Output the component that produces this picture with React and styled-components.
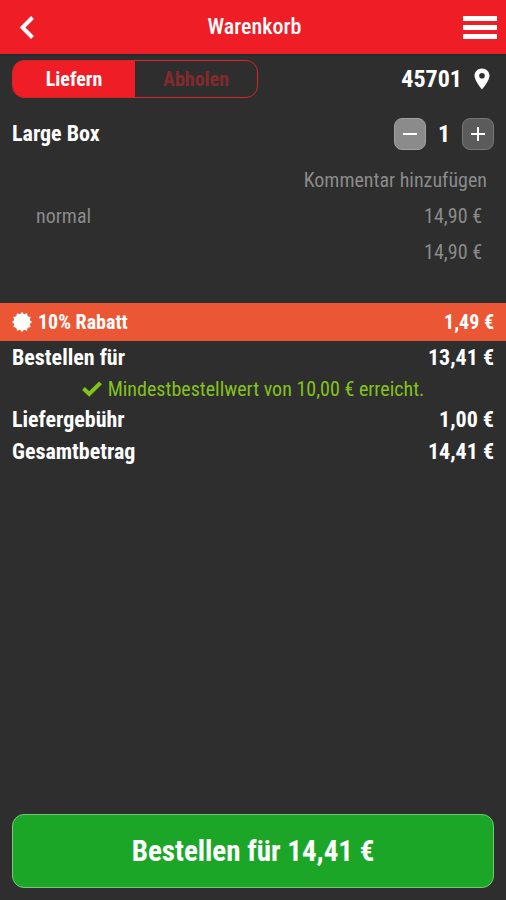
import React, { useState } from 'react';
import styled, { createGlobalStyle } from 'styled-components';

const GlobalStyle = createGlobalStyle`
  * {
    box-sizing: border-box;
  }

  body {
    margin: 0;
    background: #2e2e2e;
    color: #fff;
    font-family: 'Roboto Condensed', Roboto, 'Liberation Sans Narrow', sans-serif;
  }

  button,
  input {
    font-family: inherit;
  }
`;

const Page = styled.div`
  min-height: 100vh;
  display: flex;
  flex-direction: column;
`;

const Header = styled.header`
  height: 56px;
  padding: 0 9px 0 12px;
  display: grid;
  grid-template-columns: 36px 1fr 36px;
  align-items: center;
  background: #ef1e26;
  border-bottom: 2px solid #222b2d;
`;

const Title = styled.h1`
  margin: 0;
  font-size: 22px;
  font-weight: 500;
  line-height: 28px;
  text-align: center;
`;

const IconButton = styled.button`
  height: 36px;
  padding: 0;
  display: flex;
  align-items: center;
  justify-content: ${({ $end }) => ($end ? 'flex-end' : 'flex-start')};
  background: none;
  border: none;
  color: #fff;
  cursor: pointer;
`;

const Toolbar = styled.div`
  padding: 4px 16px 4px 12px;
  display: flex;
  align-items: center;
  justify-content: space-between;
`;

const Switch = styled.div`
  width: 246px;
  height: 38px;
  display: flex;
  border: 1px solid #d8232a;
  border-radius: 12px;
  overflow: hidden;
`;

const SwitchButton = styled.button`
  flex: 1;
  padding: 0;
  background: ${({ $active }) => ($active ? '#ef1e26' : 'transparent')};
  color: ${({ $active }) => ($active ? '#fff' : '#842a2c')};
  border: none;
  font-size: 20px;
  font-weight: 700;
  cursor: pointer;
`;

const ZipButton = styled.button`
  padding: 0;
  display: flex;
  align-items: center;
  gap: 12px;
  background: none;
  border: none;
  color: #fff;
  font-size: 24px;
  font-weight: 700;
  line-height: 28px;
  cursor: pointer;
`;

const Item = styled.section`
  padding: 14px 12px 32px;
`;

const ItemHead = styled.div`
  height: 36px;
  display: flex;
  align-items: center;
  justify-content: space-between;
`;

const ItemName = styled.h2`
  margin: 0;
  font-size: 22px;
  font-weight: 700;
  line-height: 28px;
`;

const Stepper = styled.div`
  display: flex;
  align-items: center;
`;

const Amount = styled.output`
  width: 36px;
  font-size: 24px;
  font-weight: 700;
  line-height: 28px;
  text-align: center;
`;

const StepButton = styled.button`
  width: 32px;
  height: 32px;
  padding: 0;
  display: flex;
  align-items: center;
  justify-content: center;
  background: ${({ $light }) => ($light ? '#8b8b8b' : '#5b5b5b')};
  border: 1px solid ${({ $light }) => ($light ? '#a0a0a0' : '#777')};
  border-radius: 8px;
  color: #fff;
  cursor: pointer;
`;

const CommentButton = styled.button`
  height: 36px;
  margin: 10px 7px 0 auto;
  padding: 0;
  display: block;
  background: none;
  border: none;
  color: #8b8b8b;
  font-size: 20px;
  cursor: pointer;
`;

const ItemLine = styled.div`
  padding: 0 12px 0 24px;
  display: flex;
  justify-content: space-between;
  color: #8b8b8b;
  font-size: 20px;
  line-height: 36px;
`;

const Discount = styled.div`
  height: 40px;
  padding: 0 12px;
  display: flex;
  align-items: center;
  justify-content: space-between;
  background: #eb5734;
  border: solid #263032;
  border-width: 1px 0;
  font-size: 20px;
  font-weight: 700;
`;

const DiscountLabel = styled.span`
  display: flex;
  align-items: center;
  gap: 6px;
`;

const TotalRow = styled.div`
  padding: 0 12px;
  display: flex;
  justify-content: space-between;
  font-size: 22px;
  font-weight: 700;
  line-height: 32px;
`;

const Notice = styled.p`
  margin: 0;
  display: flex;
  align-items: center;
  justify-content: center;
  gap: 6px;
  color: #82c31c;
  font-size: 20px;
  line-height: 30px;
`;

const Footer = styled.footer`
  margin-top: auto;
  padding: 12px;
`;

const OrderButton = styled.button`
  width: 100%;
  height: 74px;
  padding: 0;
  background: #1ba627;
  border: 1px solid #72c878;
  border-radius: 12px;
  color: #fff;
  font-size: 29px;
  font-weight: 700;
  cursor: pointer;
`;

const BackIcon = () => (
  <svg width="24" height="24" viewBox="0 0 24 24" fill="none" stroke="currentColor" strokeWidth="4" aria-hidden="true">
    <path d="M20.5 2.5 L10.5 12.5 L20.5 22.5" />
  </svg>
);

const MenuIcon = () => (
  <svg width="34" height="24" viewBox="0 0 34 24" fill="currentColor" aria-hidden="true">
    <rect y="1" width="34" height="5" />
    <rect y="10" width="34" height="5" />
    <rect y="19" width="34" height="5" />
  </svg>
);

const PinIcon = () => (
  <svg width="16" height="22" viewBox="0 0 16 22" fill="currentColor" aria-hidden="true">
    <path
      fillRule="evenodd"
      d="M8 0.5 C3.6 0.5 0.5 3.8 0.5 7.8 C0.5 13 8 21.5 8 21.5 C8 21.5 15.5 13 15.5 7.8 C15.5 3.8 12.4 0.5 8 0.5 Z M8 5 A2.8 2.8 0 1 1 8 10.6 A2.8 2.8 0 1 1 8 5 Z"
    />
  </svg>
);

const StepIcon = ({ plus }) => (
  <svg width="14" height="14" viewBox="0 0 14 14" stroke="currentColor" strokeWidth="2" aria-hidden="true">
    <path d={plus ? 'M0 7 H14 M7 0 V14' : 'M0 7 H14'} />
  </svg>
);

// star with 12 teeth around a filled disc
const badgePoints = Array.from({ length: 24 }, (_, i) => {
  const radius = i % 2 ? 8 : 10;
  const angle = (i * Math.PI) / 12;
  return `${(10 + radius * Math.sin(angle)).toFixed(2)},${(10 - radius * Math.cos(angle)).toFixed(2)}`;
}).join(' ');

const BadgeIcon = () => (
  <svg width="20" height="20" viewBox="0 0 20 20" fill="currentColor" aria-hidden="true">
    <polygon points={badgePoints} />
  </svg>
);

const CheckIcon = () => (
  <svg width="20" height="16" viewBox="0 0 20 16" fill="none" stroke="currentColor" strokeWidth="4" aria-hidden="true">
    <path d="M1.5 7.5 L7.2 13 L18.5 1.8" />
  </svg>
);

const euro = (value) => `${value.toFixed(2).replace('.', ',')} €`;

const App = () => {
  const [mode, setMode] = useState('Liefern');
  const [count, setCount] = useState(1);

  const subtotal = count * 14.9;
  const discount = subtotal * 0.1;
  const order = subtotal - discount;
  const delivery = 1;

  return (
    <>
      <GlobalStyle />
      <Page>
        <Header>
          <IconButton aria-label="Zurück">
            <BackIcon />
          </IconButton>
          <Title>Warenkorb</Title>
          <IconButton $end aria-label="Menü">
            <MenuIcon />
          </IconButton>
        </Header>
        <Toolbar>
          <Switch>
            {['Liefern', 'Abholen'].map((name) => (
              <SwitchButton key={name} $active={mode === name} onClick={() => setMode(name)}>
                {name}
              </SwitchButton>
            ))}
          </Switch>
          <ZipButton>
            45701
            <PinIcon />
          </ZipButton>
        </Toolbar>
        <Item>
          <ItemHead>
            <ItemName>Large Box</ItemName>
            <Stepper>
              <StepButton $light aria-label="Weniger" onClick={() => setCount(Math.max(1, count - 1))}>
                <StepIcon />
              </StepButton>
              <Amount>{count}</Amount>
              <StepButton aria-label="Mehr" onClick={() => setCount(count + 1)}>
                <StepIcon plus />
              </StepButton>
            </Stepper>
          </ItemHead>
          <CommentButton>Kommentar hinzufügen</CommentButton>
          <ItemLine>
            <span>normal</span>
            <span>{euro(14.9)}</span>
          </ItemLine>
          <ItemLine>
            <span />
            <span>{euro(subtotal)}</span>
          </ItemLine>
        </Item>
        <Discount>
          <DiscountLabel>
            <BadgeIcon />
            10% Rabatt
          </DiscountLabel>
          <span>{euro(discount)}</span>
        </Discount>
        <TotalRow>
          <span>Bestellen für</span>
          <span>{euro(order)}</span>
        </TotalRow>
        <Notice>
          <CheckIcon />
          Mindestbestellwert von 10,00 € erreicht.
        </Notice>
        <TotalRow>
          <span>Liefergebühr</span>
          <span>{euro(delivery)}</span>
        </TotalRow>
        <TotalRow>
          <span>Gesamtbetrag</span>
          <span>{euro(order + delivery)}</span>
        </TotalRow>
        <Footer>
          <OrderButton>Bestellen für {euro(order + delivery)}</OrderButton>
        </Footer>
      </Page>
    </>
  );
};

export default App;
